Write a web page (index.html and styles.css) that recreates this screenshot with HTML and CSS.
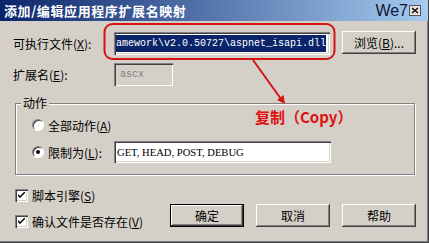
FILE: index.html
```html
<!DOCTYPE html>
<html lang="zh-CN">
<head>
    <meta charset="UTF-8">
    <title>添加/编辑应用程序扩展名映射</title>
    <link rel="stylesheet" href="styles.css">
</head>
<body>
    <div class="window">
        <div class="titlebar">
            <span class="title">添加/编辑应用程序扩展名映射</span>
            <span class="brand">We7</span>
            <span class="brand-icon">
                <svg width="12" height="11" viewBox="0 0 12 11">
                    <rect x="0.5" y="0.5" width="11" height="10" fill="#e8e4dc" stroke="#555"/>
                    <path d="M3 3 L9 8 M9 3 L3 8" stroke="#111" stroke-width="1.6"/>
                </svg>
            </span>
        </div>

        <div class="content">
            <div class="row">
                <label class="label">可执行文件(<u>X</u>):</label>
                <div class="textbox textbox-wide"><span class="selected">amework\v2.0.50727\aspnet_isapi.dll</span></div>
                <button class="btn btn-browse">浏览(<u>B</u>)...</button>
            </div>

            <div class="row row-ext">
                <label class="label">扩展名(<u>E</u>):</label>
                <div class="textbox textbox-short disabled">ascx</div>
            </div>

            <div class="group">
                <span class="legend">动作</span>
                <div class="option option-all">
                    <span class="radio"></span>
                    <span>全部动作(<u>A</u>)</span>
                </div>
                <div class="option option-limit">
                    <span class="radio checked"></span>
                    <span class="option-label">限制为(<u>L</u>):</span>
                    <div class="textbox textbox-verbs">GET, HEAD, POST, DEBUG</div>
                </div>
            </div>

            <div class="footer">
                <div class="checks">
                    <div class="check-row">
                        <span class="checkbox"><svg width="7" height="7" viewBox="0 0 7 7"><path d="M0 2 L0 4 L2 6 L7 1 L7 -1 L2 4 Z" fill="#000"/></svg></span>
                        <span>脚本引擎(<u>S</u>)</span>
                    </div>
                    <div class="check-row">
                        <span class="checkbox"><svg width="7" height="7" viewBox="0 0 7 7"><path d="M0 2 L0 4 L2 6 L7 1 L7 -1 L2 4 Z" fill="#000"/></svg></span>
                        <span>确认文件是否存在(<u>V</u>)</span>
                    </div>
                </div>
                <div class="buttons">
                    <button class="btn btn-default">确定</button>
                    <button class="btn">取消</button>
                    <button class="btn">帮助</button>
                </div>
            </div>
        </div>

        <!-- red annotation drawn over the dialog -->
        <svg class="annotation" width="429" height="243" viewBox="0 0 429 243">
            <rect x="104.5" y="24" width="230" height="35" rx="8" ry="8" fill="none" stroke="#d41414" stroke-width="2"/>
            <line x1="253" y1="60" x2="281" y2="99" stroke="#d41414" stroke-width="2"/>
            <polygon points="285,104 277,100 283.5,95" fill="#d41414"/>
        </svg>
        <div class="note">复制（Copy）</div>
    </div>
</body>
</html>
```

FILE: styles.css
```css
* {
    box-sizing: border-box;
}

body {
    margin: 0;
    font-family: "Noto Sans CJK SC", sans-serif;
    font-size: 12px;
    color: #000;
}

u {
    text-decoration: underline;
}

.window {
    position: relative;
    width: 429px;
    height: 243px;
    background: #d4d0c8;
    border-right: 1px solid #404040;
    border-bottom: 1px solid #404040;
    box-shadow: inset -1px -1px #808080;
    overflow: hidden;
}

/* title bar */
.titlebar {
    height: 21px;
    display: flex;
    align-items: center;
    padding-left: 4px;
    padding-right: 7px;
    background: linear-gradient(to right, #0a246a, #a6caf0);
    color: #fff;
}

.title {
    flex: 1;
    font-weight: bold;
    font-size: 13px;
    letter-spacing: 0.6px;
}

.brand {
    font-family: "Liberation Sans", sans-serif;
    font-size: 16px;
    color: #101838;
}

.brand-icon {
    display: flex;
    margin-left: 1px;
}

/* body */
.content {
    padding: 11px 0 0 13px;
}

.row {
    display: flex;
    align-items: center;
    height: 23px;
}

.row-ext {
    margin-top: 8px;
}

.label {
    width: 101px;
}

.textbox {
    height: 23px;
    display: flex;
    align-items: center;
    background: #fff;
    white-space: nowrap;
    overflow: hidden;
    box-shadow: inset 1px 1px #808080, inset 2px 2px #404040, inset -1px -1px #fff, inset -2px -2px #d4d0c8;
}

.textbox-wide {
    width: 216px;
    padding-left: 2px;
}

.selected {
    height: 17px;
    line-height: 17px;
    background: #0a246a;
    color: #fff;
    font-family: "Liberation Mono", monospace;
    font-size: 10px;
}

.textbox-short {
    width: 59px;
    padding-left: 6px;
}

.disabled {
    background: #d4d0c8;
    color: #808080;
    font-family: "Liberation Mono", monospace;
    font-size: 10px;
}

.btn {
    height: 23px;
    width: 74px;
    padding: 0;
    border: none;
    background: #d4d0c8;
    font-family: "Noto Sans CJK SC", sans-serif;
    font-size: 12px;
    color: #000;
    box-shadow: inset -1px -1px #404040, inset 1px 1px #fff, inset -2px -2px #808080, inset 2px 2px #d4d0c8;
}

.btn-browse {
    margin-left: 12px;
    margin-top: -2px;
}

.btn-default {
    border: 1px solid #000;
}

/* group box */
.group {
    position: relative;
    width: 400px;
    height: 72px;
    margin: 17px 0 0 2px;
    padding: 13px 0 0 16px;
    border: 1px solid #808080;
    box-shadow: inset 1px 1px #fff, 1px 1px #fff;
}

.legend {
    position: absolute;
    top: -9px;
    left: 5px;
    padding: 0 2px;
    background: #d4d0c8;
    line-height: 16px;
}

.option {
    display: flex;
    align-items: center;
}

.option-all {
    height: 16px;
}

.option-limit {
    height: 22px;
    margin-top: 8px;
}

.option-label {
    width: 66px;
}

.radio {
    position: relative;
    width: 12px;
    height: 12px;
    margin-right: 4px;
    border-radius: 50%;
    background: #fff;
    border: 1px solid;
    border-color: #808080 #fff #fff #808080;
    box-shadow: inset 1px 1px #404040;
}

.radio.checked::after {
    content: "";
    position: absolute;
    left: 3px;
    top: 3px;
    width: 4px;
    height: 4px;
    border-radius: 50%;
    background: #000;
}

.textbox-verbs {
    width: 217px;
    height: 22px;
    padding-left: 3px;
    font-family: "Liberation Serif", serif;
    font-size: 10.6px;
}

/* checkboxes and buttons */
.footer {
    display: flex;
    margin-top: 12px;
}

.checks {
    width: 157px;
    padding-left: 2px;
    display: flex;
    flex-direction: column;
    gap: 10px;
}

.check-row {
    display: flex;
    align-items: center;
    height: 16px;
}

.checkbox {
    width: 13px;
    height: 13px;
    margin-right: 4px;
    display: flex;
    align-items: center;
    justify-content: center;
    background: #fff;
    box-shadow: inset 1px 1px #808080, inset 2px 2px #404040, inset -1px -1px #fff, inset -2px -2px #d4d0c8;
}

.buttons {
    display: flex;
    gap: 12px;
    margin-top: 17px;
}

/* annotation overlay */
.annotation {
    position: absolute;
    top: 0;
    left: 0;
    pointer-events: none;
}

.note {
    position: absolute;
    left: 255px;
    top: 106px;
    font-size: 15px;
    font-weight: bold;
    color: #e01010;
}
```
